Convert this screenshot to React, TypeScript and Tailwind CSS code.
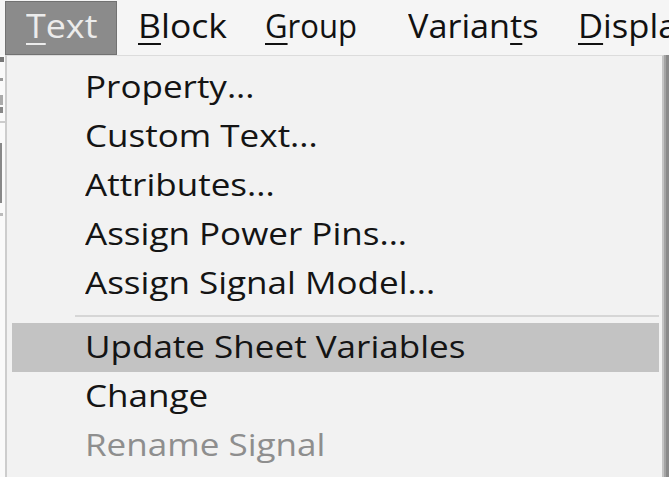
import React from "react";

const font = { fontFamily: '"Open Sans", "Noto Sans", sans-serif' };

function U({ children }: { children: React.ReactNode }) {
  return <span className="underline decoration-[2px] underline-offset-[5px]">{children}</span>;
}

const items: { label: string; disabled?: boolean; active?: boolean; sepBefore?: boolean }[] = [
  { label: "Property..." },
  { label: "Custom Text..." },
  { label: "Attributes..." },
  { label: "Assign Power Pins..." },
  { label: "Assign Signal Model..." },
  { label: "Update Sheet Variables", active: true, sepBefore: true },
  { label: "Change" },
  { label: "Rename Signal", disabled: true },
];

export default function App() {
  return (
    <div className="w-[669px] h-[477px] overflow-hidden bg-[#f4f4f4]" style={font}>
      {/* Menu bar */}
      <div className="h-[55px] flex items-stretch pl-[5px] pt-[1px] bg-[#f5f5f5] text-[32px] text-[#111] leading-none whitespace-nowrap">
        <div className="w-[112px] shrink-0 flex items-center pl-[20px] bg-[#8b8b8b] border border-[#727272] text-[#ececec]">
          <span className="-mt-[4px] inline-block origin-left scale-x-[1.12]"><U>T</U>ext</span>
        </div>
        <div className="w-[128px] shrink-0 flex items-center pl-[21px]">
          <span className="-mt-[4px] inline-block origin-left scale-x-[1.11]"><U>B</U>lock</span>
        </div>
        <div className="w-[142px] shrink-0 flex items-center pl-[20px]">
          <span className="-mt-[4px] inline-block origin-left scale-x-[0.97]"><U>G</U>roup</span>
        </div>
        <div className="w-[171px] shrink-0 flex items-center pl-[21px]">
          <span className="-mt-[4px] inline-block origin-left scale-x-[1.07]">Varian<U>t</U>s</span>
        </div>
        <div className="shrink-0 flex items-center pl-[20px]">
          <span className="-mt-[4px] inline-block origin-left scale-x-[1.08]"><U>D</U>isplay</span>
        </div>
      </div>
      {/* Body below */}
      <div className="flex h-[422px]">
        <div className="w-[5px] bg-[#fafafa] flex flex-col items-start">
          <div className="mt-[2px] w-[4px] h-[5px] bg-[#777]" />
          <div className="mt-[16px] w-[3px] h-[3px] bg-[#999]" />
          <div className="mt-[14px] w-[3px] h-[10px] bg-[#aaa]" />
          <div className="mt-[2px] w-[3px] h-[6px] bg-[#888]" />
          <div className="mt-[8px] w-[5px] h-[2px] bg-[#ccc]" />
          <div className="mt-[20px] w-[2px] h-[60px] bg-[#888]" />
          <div className="mt-[10px] w-[3px] h-[3px] bg-[#bbb]" />
        </div>
        <div className="w-[659px] shrink-0 border-l-[2px] border-l-[#cdcdcd] border-t border-t-[#dcdcdc] border-r-[2px] border-r-[#c4c4c4] bg-[#f2f2f2] pt-[7px] flex flex-col">
          {items.map((it) => (
            <React.Fragment key={it.label}>
              {it.sepBefore && (
                <div className="h-[15px] flex items-center">
                  <div className="ml-[68px] mr-[3px] flex-1 h-[2px] bg-[#d6d6d6]" />
                </div>
              )}
              <div
                className={
                  "h-[49px] flex items-center pl-[73px] ml-[5px] mr-[3px] text-[31px] leading-none whitespace-nowrap " +
                  (it.active ? "bg-[#c3c3c3] " : "") +
                  (it.disabled ? "text-[#8e8e8e]" : "text-[#141414]")
                }
              >
                <span className="-mt-[3px] inline-block origin-left scale-x-[1.13]">{it.label}</span>
              </div>
            </React.Fragment>
          ))}
        </div>
        <div className="w-[2px] bg-[#a4a4a4]" />
        <div className="w-[3px] bg-[#8a8a8a]" />
      </div>
    </div>
  );
}
